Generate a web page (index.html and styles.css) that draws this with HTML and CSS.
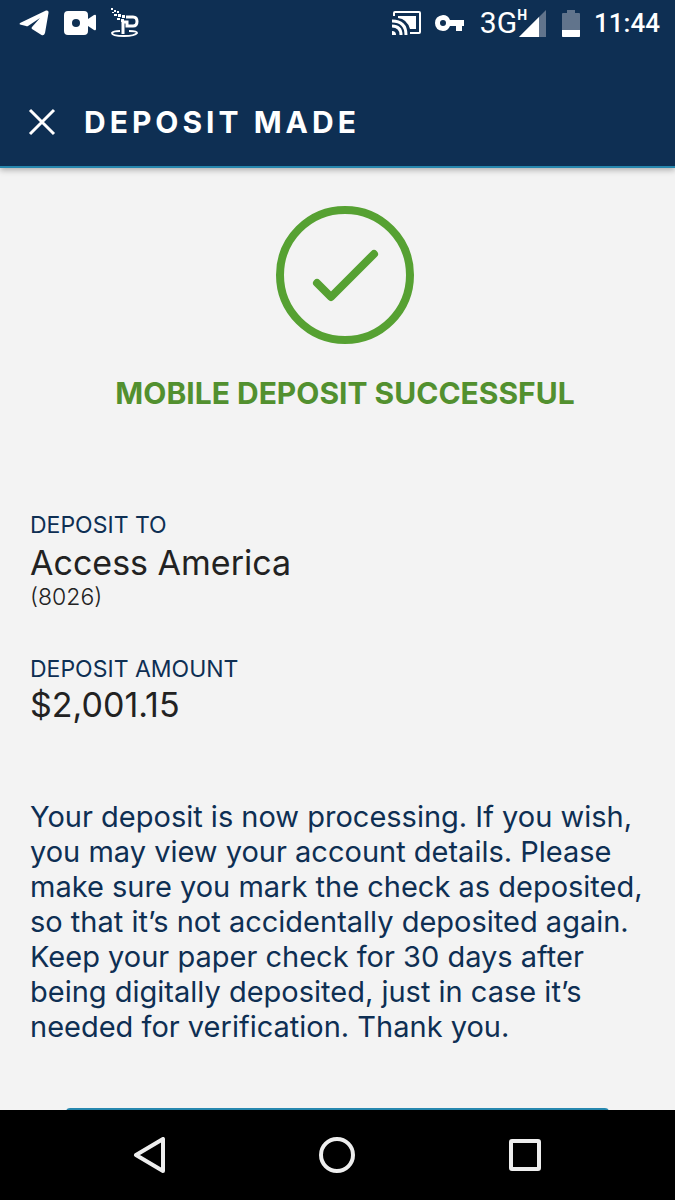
FILE: index.html
```html
<!DOCTYPE html>
<html lang="en">
<head>
  <meta charset="UTF-8">
  <meta name="viewport" content="width=device-width, initial-scale=1.0">
  <title>Deposit Made</title>
  <link rel="stylesheet" href="styles.css">
</head>
<body>
  <header class="header">
    <div class="status-bar">
      <div class="status-left">
        <svg width="30" height="26" viewBox="0 0 30 26" fill="#fff"><path d="M1 13 27 .5Q30 0 29.500 3L26 23q-1 3-3.500 2L13 19q-1-1 0-2l8-9-12 8q-1 .5-2 0l-6-1.500q-1-.5 0-1.500z"/></svg>
        <svg width="32" height="26" viewBox="0 0 32 26"><path fill="#fff" d="M4 1h16q4 0 4 4v4l6-4q2-1 2 1v13q0 2-2 1l-6-4v5q0 4-4 4H4q-4 0-4-4V5q0-4 4-4z"/><circle cx="12" cy="13" r="4" fill="#0e2f53"/></svg>
        <svg width="28" height="30" viewBox="0 0 28 30" fill="#fff">
          <path d="M0 0h2v2H0zM3 2h2v2H3zM1 4h2v1H1zM6 3h2v2H6zM3 6h3v2H3zM7 6h3v3H7zM11 7h3v3h-3zM6 10h3v2H6zM10 11h3v3h-3z"/>
          <path d="M15 9h7q4 0 4 4.500T22 18h-6v-4h-4v12" fill="none" stroke="#fff" stroke-width="3"/>
          <path d="M9 23q-7 0-8 2 0 3 12 3 11 0 13-3 0-2-8-2" fill="none" stroke="#fff" stroke-width="2"/>
        </svg>
      </div>
      <div class="status-right">
        <svg width="30" height="26" viewBox="0 0 30 26">
          <path d="M2 6V3q0-1 1-1h24q1 0 1 1v19q0 1-1 1h-9" fill="none" stroke="#fff" stroke-width="2"/>
          <path d="M6 6h18v13h-6Q15 9 6 8z" fill="#fff"/>
          <path d="M0 21q4 0 4 4H0z" fill="#fff"/>
          <path d="M0 16q9 0 9 9M0 11q14 0 14 14" fill="none" stroke="#fff" stroke-width="3"/>
        </svg>
        <svg class="key" width="30" height="18" viewBox="0 0 30 18" fill="#fff"><path fill-rule="evenodd" d="M9 1q5 0 7 5h14v6h-2v5h-6v-5h-6q-2 5-7 5Q1 16 1 9t8-8zm0 5q-3 0-3 3t3 3 3-3-3-3z"/></svg>
        <span class="network">3G<sup>H</sup></span>
        <svg class="signal" width="27" height="27" viewBox="0 0 27 27"><path d="M27 0v27H0z" fill="#61748c"/><path d="M20 7v20H0z" fill="#fff"/></svg>
        <svg class="battery" width="18" height="27" viewBox="0 0 18 27"><path d="M5 0h8v3h4q1 0 1 1v23H0V4q0-1 1-1h4z" fill="#61748c"/><path d="M0 20h18v6q0 1-1 1H1q-1 0-1-1z" fill="#fff"/></svg>
        <span class="clock">11:44</span>
      </div>
    </div>
    <div class="title-bar">
      <button class="close-btn" aria-label="Close">
        <svg width="28" height="28" viewBox="0 0 28 28" fill="none" stroke="#fff" stroke-width="3"><path d="m2 2 24 24M26 2 2 26"/></svg>
      </button>
      <h1>DEPOSIT MADE</h1>
    </div>
  </header>

  <main>
    <div class="content">
      <section class="result">
        <svg width="140" height="140" viewBox="0 0 140 140" fill="none" stroke="#56a132" stroke-width="8">
          <circle cx="70" cy="70" r="65"/>
          <path d="m42 78 14 14 43-43" stroke-linecap="round" stroke-linejoin="round"/>
        </svg>
        <h2>MOBILE DEPOSIT SUCCESSFUL</h2>
      </section>

      <dl class="details">
        <dt>DEPOSIT TO</dt>
        <dd>Access America</dd>
        <dd class="account">(8026)</dd>
        <dt>DEPOSIT AMOUNT</dt>
        <dd class="amount">$2,001.15</dd>
      </dl>

      <p class="message">Your deposit is now processing. If you wish,<br>
        you may view your account details. Please<br>
        make sure you mark the check as deposited,<br>
        so that it’s not accidentally deposited again.<br>
        Keep your paper check for 30 days after<br>
        being digitally deposited, just in case it’s<br>
        needed for verification. Thank you.</p>
    </div>
    <button class="account-btn" aria-label="View account"></button>
  </main>

  <nav class="nav-bar">
    <button aria-label="Back"><svg width="36" height="36" viewBox="0 0 36 36"><path d="M31 2v32L4 18z"/></svg></button>
    <button aria-label="Home"><svg width="36" height="36" viewBox="0 0 36 36"><circle cx="18" cy="18" r="16"/></svg></button>
    <button aria-label="Recent apps"><svg width="36" height="36" viewBox="0 0 36 36"><rect x="4" y="4" width="28" height="28" rx="1"/></svg></button>
  </nav>
</body>
</html>
```
FILE: styles.css
```css
* { margin: 0; padding: 0; box-sizing: border-box; }
body {
  display: flex;
  flex-direction: column;
  height: 100vh;
  font-family: Inter, "Open Sans", sans-serif;
  background: #f3f3f3;
  color: #222;
}
button {
  background: none;
  border: none;
  cursor: pointer;
}
svg {
  display: block;
  flex-shrink: 0;
}
.header {
  position: relative;
  background: #0e2f53;
  color: #fff;
  border-bottom: 2px solid #2687ae;
  box-shadow: 0 2px 6px rgba(0, 0, 0, 0.3);
}
.status-bar {
  display: flex;
  justify-content: space-between;
  align-items: center;
  height: 46px;
  padding: 0 15px 0 19px;
}
.status-left,
.status-right {
  display: flex;
  align-items: center;
}
.status-left {
  gap: 15px;
}
.key {
  margin: 0 16px 0 12px;
}
.network {
  display: flex;
  font-family: Roboto, sans-serif;
  font-size: 30px;
  line-height: 36px;
}
.network sup {
  font-size: 14px;
  font-weight: bold;
  line-height: 20px;
}
.signal {
  margin-left: -8px;
}
.battery {
  margin: 0 14px 0 16px;
}
.clock {
  font-family: Roboto, sans-serif;
  font-size: 26px;
  font-weight: 500;
}
.title-bar {
  display: flex;
  align-items: center;
  gap: 28px;
  height: 120px;
  padding: 32px 28px 0;
}
.close-btn {
  display: flex;
}
h1 {
  font-size: 30px;
  font-weight: 700;
  letter-spacing: 4px;
}
main {
  flex: 1;
  min-height: 0;
  overflow: hidden;
}
.content {
  padding: 37px 15px 0 30px;
}
.result {
  display: flex;
  flex-direction: column;
  align-items: center;
  gap: 28px;
}
h2 {
  font-size: 30px;
  font-weight: 700;
  line-height: 40px;
  color: #52902f;
  white-space: nowrap;
}
.details {
  margin-top: 96px;
}
dt {
  font-size: 23px;
  line-height: 32px;
  color: #0e2f53;
}
dd {
  font-size: 34px;
  line-height: 44px;
}
.account {
  margin-bottom: 44px;
  font-size: 23px;
  font-weight: 300;
  line-height: 24px;
}
.amount {
  line-height: 40px;
}
.message {
  margin-top: 74px;
  font-size: 29px;
  line-height: 35px;
  color: #0e2f53;
  white-space: nowrap;
}
.account-btn {
  display: block;
  width: calc(100% - 132px);
  height: 80px;
  margin: 64px auto 0;
  background: #2687ae;
  border-radius: 4px;
}
.nav-bar {
  display: flex;
  justify-content: space-around;
  align-items: center;
  height: 90px;
  padding: 0 56px;
  background: #000;
}
.nav-bar svg {
  fill: none;
  stroke: #eee;
  stroke-width: 4;
  stroke-linejoin: round;
}
```
